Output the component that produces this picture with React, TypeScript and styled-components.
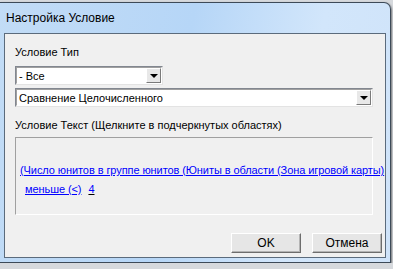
import React from "react";
import styled, { createGlobalStyle } from "styled-components";

const GlobalStyle = createGlobalStyle`
  html, body {
    margin: 0;
    padding: 0;
    background: #d6d9dd;
    overflow: hidden;
  }
  body {
    font-family: "Liberation Sans", Arial, sans-serif;
  }
`;

const Window = styled.div`
  margin-top: 2px;
  width: 391px;
  height: 261px;
  box-sizing: border-box;
  border: 1px solid #3d4a58;
  border-left: none;
  border-radius: 0 7px 0 0;
  background: linear-gradient(100deg, #c2dcf6 0%, #b6d6f7 45%, #d2e6fb 75%, #cfe3f9 100%);
  display: flex;
  flex-direction: column;
  padding: 0 4px 4px 4px;
  box-shadow: 1px 1px 2px rgba(0, 0, 0, 0.45);
`;

const TitleBar = styled.div`
  height: 30px;
  display: flex;
  align-items: center;
  padding-left: 2px;
  font-size: 12px;
  color: #000;
  flex-shrink: 0;
`;

const Client = styled.div`
  flex: 1;
  border: 1px solid #5b6b7c;
  background: #f0f0f0;
  display: flex;
  flex-direction: column;
  padding: 12px 10px 0 10px;
  font-size: 11px;
  color: #000;
`;

const Label = styled.div<{ $mt?: number }>`
  line-height: 13px;
  margin-top: ${(p) => p.$mt ?? 0}px;
  white-space: nowrap;
`;

const Combo = styled.div<{ $w: number; $mt: number }>`
  width: ${(p) => p.$w}px;
  height: 19px;
  margin-top: ${(p) => p.$mt}px;
  box-sizing: border-box;
  border: 1px solid;
  border-color: #828790 #e3e3e3 #e3e3e3 #828790;
  background: #fff;
  display: flex;
  align-items: center;
  position: relative;
  padding-left: 3px;
`;

const ComboInner = styled.div`
  position: absolute;
  inset: 0;
  border: 1px solid;
  border-color: #a0a0a0 #fff #fff #a0a0a0;
  pointer-events: none;
`;

const ComboText = styled.span`
  flex: 1;
  position: relative;
`;

const DropButton = styled.div`
  width: 15px;
  height: 15px;
  margin-right: 1px;
  box-sizing: border-box;
  background: #e8e8e8;
  border: 1px solid;
  border-color: #fff #7a7a7a #7a7a7a #fff;
  display: flex;
  align-items: center;
  justify-content: center;
  position: relative;
`;

const Arrow = styled.div`
  width: 0;
  height: 0;
  border-left: 4px solid transparent;
  border-right: 4px solid transparent;
  border-top: 4px solid #000;
  margin-top: 1px;
`;

const TextBox = styled.div`
  width: 358px;
  height: 78px;
  margin-top: 5px;
  box-sizing: border-box;
  border: 1px solid;
  border-color: #a0a0a0 #fff #fff #a0a0a0;
  background: #f0f0f0;
  padding: 23px 0 0 4px;
  line-height: 19px;
  white-space: nowrap;
  letter-spacing: -0.08px;
`;

const Link = styled.span<{ $indent?: number; $line?: string }>`
  color: #0000ff;
  text-decoration: underline;
  text-decoration-color: ${(p) => p.$line ?? "#0000ff"};
  margin-left: ${(p) => p.$indent ?? 0}px;
`;

const Line = styled.div``;

const ButtonRow = styled.div`
  margin-top: auto;
  margin-bottom: 4px;
  display: flex;
  justify-content: flex-end;
  gap: 11px;
  margin-right: -7px;
`;

const Button = styled.div`
  width: 70px;
  height: 20px;
  box-sizing: border-box;
  background: #e6e6e6;
  border: 1px solid;
  border-color: #fff #6d6d6d #6d6d6d #fff;
  box-shadow: inset -1px -1px 0 #b4b4b4;
  display: flex;
  align-items: center;
  justify-content: center;
  font-size: 12px;
`;

export default function App() {
  return (
    <>
      <GlobalStyle />
      <Window>
        <TitleBar>Настройка Условие</TitleBar>
        <Client>
          <Label>Условие Тип</Label>
          <Combo $w={148} $mt={7}>
            <ComboInner />
            <ComboText>- Все</ComboText>
            <DropButton>
              <Arrow />
            </DropButton>
          </Combo>
          <Combo $w={358} $mt={3}>
            <ComboInner />
            <ComboText>Сравнение Целочисленного</ComboText>
            <DropButton>
              <Arrow />
            </DropButton>
          </Combo>
          <Label $mt={12}>Условие Текст (Щелкните в подчеркнутых областях)</Label>
          <TextBox>
            <Line>
              <Link>(Число юнитов в группе юнитов (Юниты в области (Зона игровой карты)</Link>
            </Line>
            <Line>
              <Link $indent={5}>меньше (&lt;)</Link>
              <Link $indent={7} $line="#000">4</Link>
            </Line>
          </TextBox>
          <ButtonRow>
            <Button>OK</Button>
            <Button>Отмена</Button>
          </ButtonRow>
        </Client>
      </Window>
    </>
  );
}
